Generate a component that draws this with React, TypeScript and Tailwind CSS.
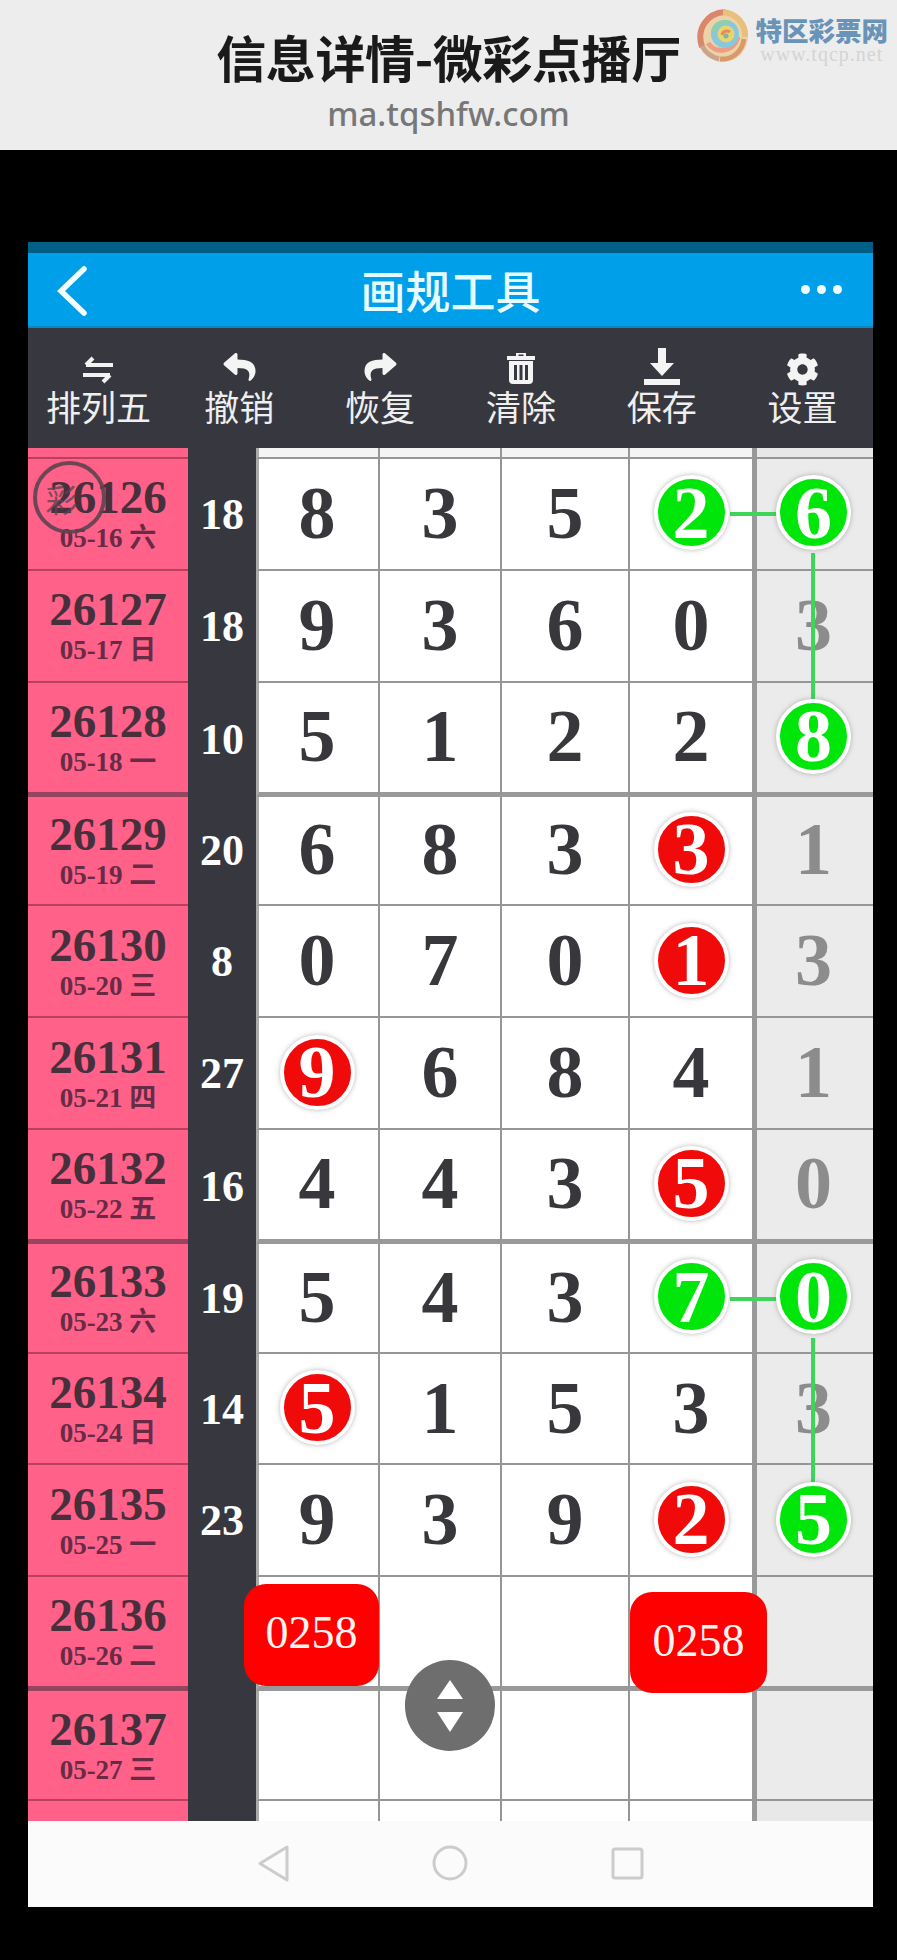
import React from "react";
import { FaReply, FaShare, FaCog } from "react-icons/fa";

type Cell = number | string | null;
type Row = { id: string; date: string; sum: string; cells: Cell[]; thick?: boolean; afterThick?: boolean; h?: boolean; v?: boolean };

const rows: Row[] = [
  { id: "26126", date: "05-16 六", sum: "18", cells: [8, 3, 5, "g2", "g6"], h: true, v: true },
  { id: "26127", date: "05-17 日", sum: "18", cells: [9, 3, 6, 0, 3] },
  { id: "26128", date: "05-18 一", sum: "10", cells: [5, 1, 2, 2, "g8"], thick: true },
  { id: "26129", date: "05-19 二", sum: "20", cells: [6, 8, 3, "r3", 1], afterThick: true },
  { id: "26130", date: "05-20 三", sum: "8", cells: [0, 7, 0, "r1", 3] },
  { id: "26131", date: "05-21 四", sum: "27", cells: ["r9", 6, 8, 4, 1] },
  { id: "26132", date: "05-22 五", sum: "16", cells: [4, 4, 3, "r5", 0], thick: true },
  { id: "26133", date: "05-23 六", sum: "19", cells: [5, 4, 3, "g7", "g0"], afterThick: true, h: true, v: true },
  { id: "26134", date: "05-24 日", sum: "14", cells: ["r5", 1, 5, 3, 3] },
  { id: "26135", date: "05-25 一", sum: "23", cells: [9, 3, 9, "r2", "g5"] },
  { id: "26136", date: "05-26 二", sum: "", cells: [null, null, null, null, null], thick: true },
  { id: "26137", date: "05-27 三", sum: "", cells: [null, null, null, null, null], afterThick: true },
];

const tools = [
  {
    label: "排列五",
    icon: (
      <svg className="mb-[2px]" width="32" height="28" viewBox="0 0 32 28" fill="none" stroke="#f2f2f2" strokeWidth="4">
        <path d="M31 9H4M11 2 4 9" />
        <path d="M1 19h27M21 26l7-7" />
      </svg>
    ),
  },
  { label: "撤销", icon: <FaReply className="mb-[3px] w-[37px] h-[32px] text-[#f4f4f4]" /> },
  { label: "恢复", icon: <FaShare className="mb-[3px] w-[37px] h-[32px] text-[#f4f4f4]" /> },
  {
    label: "清除",
    icon: (
      <svg className="mb-[2px]" width="30" height="32" viewBox="0 0 30 32" fill="#f4f4f4">
        <path d="M10 4V1h10v3h9v4H1V4zM12.500 2.500V4h5V2.500z" />
        <path d="M3 9h24v19a4 4 0 0 1-4 4H7a4 4 0 0 1-4-4zm5 4v15h3V13zm5.500 0v15h3V13zM19 13v15h3V13z" fillRule="evenodd" />
      </svg>
    ),
  },
  {
    label: "保存",
    icon: (
      <svg width="38" height="38" viewBox="0 0 38 38" fill="#f4f4f4">
        <path d="M15 0h8v15h8L19 28 7 15h8z" />
        <path d="M1 31h36v6H1z" />
      </svg>
    ),
  },
  { label: "设置", icon: <FaCog className="w-[33px] h-[33px] text-[#f4f4f4]" /> },
];

const COLS = "grid grid-cols-[160px_68px_124px_122px_128px_122px_121px]";

function Ball({ value }: { value: string }) {
  const green = value[0] === "g";
  return (
    <div
      className={`relative z-20 w-[75px] h-[75px] rounded-full border-4 border-white shadow-[0_0_5px_rgba(120,120,120,0.55)] flex items-center justify-center text-white ${
        green ? "bg-[#00e60a]" : "bg-[#f00a0a]"
      }`}
    >
      {value[1]}
    </div>
  );
}

function DataRow({ row }: { row: Row }) {
  const line = row.thick ? "border-b-[5px] border-b-[#999999]" : "border-b-2 border-b-[#969696]";
  const pinkLine = row.thick ? "border-b-[5px] border-b-[#95455f]" : "border-b-2 border-b-[#b8415f]";
  const height = row.thick ? "h-[114px]" : row.afterThick ? "h-[109.66px]" : "h-[111.83px]";
  return (
    <div className={`${COLS} ${height}`}>
      <div className={`bg-[#ff6189] flex flex-col items-center justify-center ${pinkLine}`}>
        <div className="text-[47px] leading-[50px] font-bold text-[#47303c]">{row.id}</div>
        <div className="text-[27px] leading-[33px] font-bold text-[#672b46]">{row.date}</div>
      </div>
      <div className="bg-[#37383f] flex items-center justify-center text-[44px] font-bold text-white">{row.sum}</div>
      {row.cells.map((c, i) => {
        const last = i === 4;
        const ball = typeof c === "string";
        return (
          <div
            key={i}
            className={`relative flex items-center justify-center pb-[2px] text-[74px] leading-none font-bold ${line} ${
              last ? "bg-[#ebebeb] text-[#8c8c8c] border-l-[5px] border-l-[#999999] pr-[3px]" : "bg-white text-[#38383c]"
            } ${i < 3 ? "border-r-2 border-r-[#969696]" : ""} ${i === 0 ? "border-l-[3px] border-l-[#aaaaaa] pr-[3px]" : ""}`}
          >
            {ball ? <Ball value={c as string} /> : c}
            {i === 3 && row.h && <div className="absolute left-[100px] top-[53px] w-[46px] h-[4px] bg-[#3dd65a] z-10" />}
            {last && row.v && <div className="absolute left-[54px] top-[94px] w-[4px] h-[146px] bg-[#3dd65a] z-10" />}
          </div>
        );
      })}
    </div>
  );
}

function Stub({ className, top }: { className: string; top?: boolean }) {
  const line = top ? "border-b-2 border-b-[#969696]" : "";
  const bg = top ? "bg-[#f4f4f4]" : "bg-white";
  return (
    <div className={`${COLS} ${className}`}>
      <div className={`bg-[#ff6189] ${top ? "border-b-2 border-b-[#b8415f]" : ""}`} />
      <div className="bg-[#37383f]" />
      <div className={`${bg} border-l-[3px] border-l-[#aaaaaa] border-r-2 border-r-[#969696] ${line}`} />
      <div className={`${bg} border-r-2 border-r-[#969696] ${line}`} />
      <div className={`${bg} border-r-2 border-r-[#969696] ${line}`} />
      <div className={`${bg} ${line}`} />
      <div className={`bg-[#e8e8e8] border-l-[5px] border-l-[#999999] ${line}`} />
    </div>
  );
}

function Logo() {
  return (
    <div className="absolute right-[9px] top-[9px] flex items-start gap-[7px]">
      <svg width="52" height="54" viewBox="0 0 52 54" fill="none">
        <ellipse cx="26" cy="27" rx="25" ry="26" fill="#ecd2a8" />
        <path d="M5 38C-1 20 10 4 28 3" stroke="#d9866a" strokeWidth="6" />
        <path d="M26 3c13 1 23 12 22 25" stroke="#e9c07a" strokeWidth="6" />
        <path d="M47 30c-2 14-13 21-24 20" stroke="#d99a6a" strokeWidth="5" />
        <path d="M22 50C14 48 8 43 5 37" stroke="#c9a58c" strokeWidth="5" />
        <path d="M11 34c7 11 25 10 30-6" stroke="#ee9c86" strokeWidth="5" />
        <circle cx="28" cy="25" r="14" fill="#86c8dc" />
        <path d="M16 23c1-8 10-12 17-9" stroke="#8fd0a8" strokeWidth="4" />
        <circle cx="29" cy="25" r="8.500" fill="#e9d56c" />
        <path d="M25 26a5 5 0 0 1 8-3" stroke="#e88a5c" strokeWidth="3" />
        <circle cx="29" cy="27" r="2.500" fill="#7fb59a" />
      </svg>
      <div className="flex flex-col items-center mt-[6px]">
        <div className="text-[26.500px] leading-[29px] font-black text-[#6a93b8] font-['Noto_Sans_CJK_SC',sans-serif] whitespace-nowrap">特区彩票网</div>
        <div className="text-[20px] leading-[20px] tracking-[1px] text-[#d4d4d4] font-['Liberation_Serif',serif] whitespace-nowrap">www.tqcp.net</div>
      </div>
    </div>
  );
}

export default function App() {
  return (
    <div className="w-[897px] h-[1960px] bg-black flex flex-col overflow-hidden font-['Liberation_Serif','Noto_Sans_CJK_SC',serif]">
      <header className="relative h-[150px] bg-[#ededed] flex flex-col items-center shrink-0">
        <div className="mt-[21px] text-[50px] leading-[70px] font-bold text-[#1a1a1a] font-['Noto_Sans_CJK_SC',sans-serif] whitespace-nowrap tracking-[-0.400px]">信息详情-微彩点播厅</div>
        <div className="mt-[1px] text-[33px] leading-[44px] text-[#777777] font-['Noto_Sans',sans-serif] font-medium">ma.tqshfw.com</div>
        <Logo />
      </header>

      <div className="mt-[92px] mx-[28px] w-[845px] h-[1665px] flex flex-col shrink-0">
        <div className="h-[11px] bg-[#005f86] shrink-0" />
        <div className="relative h-[75px] bg-[#009fe9] flex items-center justify-center shrink-0 border-b-2 border-b-[#0a86c0]">
          <svg className="absolute left-[28px] top-[13px]" width="34" height="50" viewBox="0 0 34 50" fill="none" stroke="#f4ffff" strokeWidth="5.500" strokeLinecap="round">
            <path d="M28 3 5 25l23 22" />
          </svg>
          <div className="text-[45px] leading-none font-medium text-[#e8fbff] font-['Noto_Sans_CJK_SC',sans-serif]">画规工具</div>
          <div className="absolute right-[31px] top-[32px] flex gap-[7px]">
            <div className="w-[9px] h-[9px] rounded-full bg-[#eefcff]" />
            <div className="w-[9px] h-[9px] rounded-full bg-[#eefcff]" />
            <div className="w-[9px] h-[9px] rounded-full bg-[#eefcff]" />
          </div>
        </div>
        <div className="h-[120px] bg-[#37383f] grid grid-cols-6 shrink-0">
          {tools.map((t) => (
            <div key={t.label} className="flex flex-col items-center">
              <div className="h-[39px] mt-[19px] flex items-end justify-center">{t.icon}</div>
              <div className="-mt-[2px] text-[35px] leading-[44px] text-[#efefef] font-['Noto_Sans_CJK_SC',sans-serif]">{t.label}</div>
            </div>
          ))}
        </div>

        <div className="relative flex-1 flex flex-col overflow-hidden">
          <Stub className="h-[11px] shrink-0" top />
          {rows.map((r) => (
            <DataRow key={r.id} row={r} />
          ))}
          <Stub className="flex-1" />

          <div className="absolute left-[5px] top-[13px] w-[73px] h-[73px] rounded-full border-[4px] border-[#5d4450]/90 flex items-center justify-center text-[32px] text-[#5d4450]/80 font-['Noto_Sans_CJK_SC',sans-serif]">
            <span className="-ml-[16px]">彩</span>
          </div>

          <div className="absolute left-[216px] top-[1136px] w-[135px] h-[102px] pb-[5px] rounded-[22px] bg-[#ff0000] flex items-center justify-center text-[46px] text-[#fff4f0] z-30">0258</div>
          <div className="absolute left-[602px] top-[1144px] w-[137px] h-[101px] pb-[5px] rounded-[22px] bg-[#ff0000] flex items-center justify-center text-[46px] text-[#fff4f0] z-30">0258</div>
          <div className="absolute left-[377px] top-[1212px] w-[90px] h-[91px] rounded-full bg-[#6e6e6e] z-30 flex items-center justify-center">
            <svg width="28" height="52" viewBox="0 0 28 52" fill="#ffffff">
              <path d="M14 0 27 19H1z" />
              <path d="M14 52 27 32H1z" />
            </svg>
          </div>
        </div>

        <div className="h-[86px] bg-[#fbfbfb] shrink-0 flex items-center justify-center gap-[143px] pb-[2px]">
          <svg width="32" height="37" viewBox="0 0 32 37" fill="none" stroke="#cccccc" strokeWidth="3">
            <path d="M30 2v33L3 18.500z" strokeLinejoin="round" />
          </svg>
          <svg width="36" height="36" viewBox="0 0 36 36" fill="none" stroke="#cccccc" strokeWidth="3">
            <circle cx="18" cy="18" r="16" />
          </svg>
          <svg width="33" height="33" viewBox="0 0 33 33" fill="none" stroke="#cccccc" strokeWidth="3">
            <rect x="2" y="2" width="29" height="29" rx="2" />
          </svg>
        </div>
      </div>
    </div>
  );
}
